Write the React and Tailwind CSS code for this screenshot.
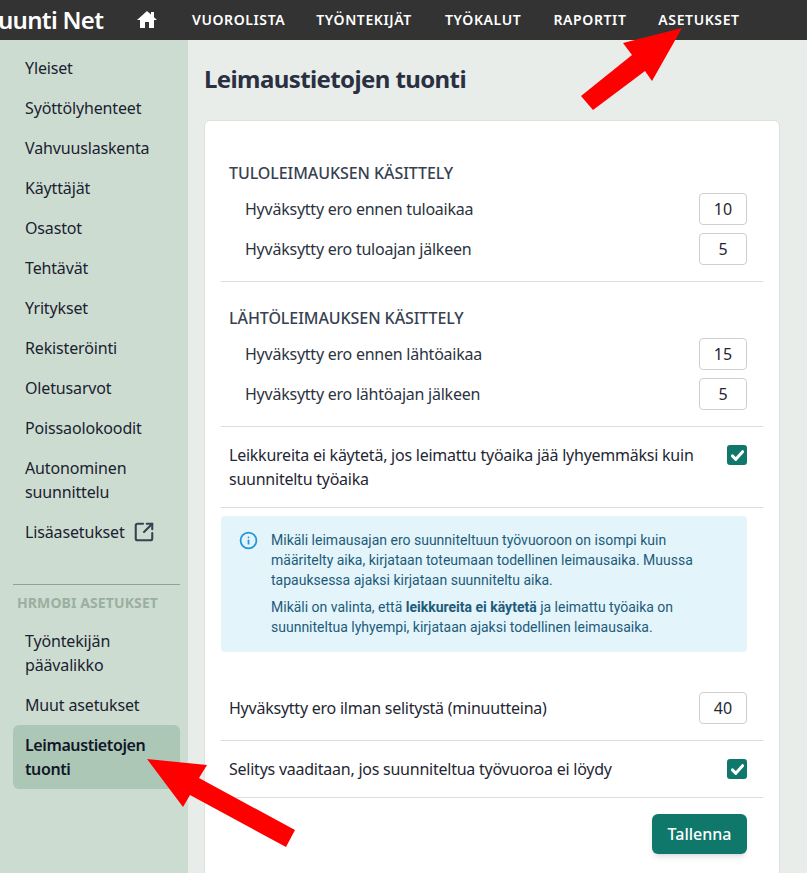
import { Info, SquareArrowOutUpRight } from 'lucide-react';

const navItems = [
  { label: 'VUOROLISTA', width: 'w-[91px]' },
  { label: 'TYÖNTEKIJÄT', width: 'w-[97px]' },
  { label: 'TYÖKALUT', width: 'w-[76px]' },
  { label: 'RAPORTIT', width: 'w-[72px]' },
  { label: 'ASETUKSET', width: 'w-[82px]' },
];

const sideItems = ['Yleiset', 'Syöttölyhenteet', 'Vahvuuslaskenta', 'Käyttäjät', 'Osastot', 'Tehtävät', 'Yritykset', 'Rekisteröinti', 'Oletusarvot', 'Poissaolokoodit'];

const SideLink = ({ children, active }) => (
  <a className={`block rounded-md px-3 py-2 text-base leading-6 ${active ? 'bg-[#adc7b7] font-semibold tracking-[-0.4px] text-[#111827]' : 'tracking-[-0.15px] text-[#1a2230]'}`}>
    {children}
  </a>
);

const NumberRow = ({ label, value }) => (
  <div className="flex h-8 items-center justify-between pl-6 pr-4">
    <span className="tracking-[-0.24px] text-[#2b3340]">{label}</span>
    <NumberBox value={value} />
  </div>
);

const NumberBox = ({ value }) => (
  <div className="flex h-8 w-12 items-center justify-center rounded border border-[#cfcfcf] bg-white text-[#1f2733]">{value}</div>
);

const Checkbox = () => (
  <div className="flex h-5 w-5 shrink-0 items-center justify-center rounded-[3px] bg-[#10776b]">
    <svg viewBox="0 0 20 20" className="h-[17px] w-[17px]" fill="none" stroke="white" strokeWidth="3.5" strokeLinecap="round" strokeLinejoin="round">
      <path d="M4 10.5l4 4 8-9" />
    </svg>
  </div>
);

const App = () => {
  return (
    <div className="relative flex h-screen flex-col overflow-hidden font-['Noto_Sans',sans-serif] text-base">
      <header className="flex h-10 shrink-0 items-center bg-[#333333] text-white">
        <div className="ml-[-2px] w-[137px] text-2xl font-semibold leading-none tracking-[-0.7px]">uunti Net</div>
        <svg viewBox="0 0 24 24" className="h-6 w-6" fill="white">
          <path d="M19 9.3V4h-3v2.6L12 3 2 12h3v8h5v-6h4v6h5v-8h3z" />
        </svg>
        <nav className="ml-[33px] flex gap-[32.5px] text-sm font-semibold tracking-[0.6px]">
          {navItems.map((item) => (
            <a key={item.label} className={`${item.width} whitespace-nowrap text-center`}>{item.label}</a>
          ))}
        </nav>
      </header>

      <div className="flex min-h-0 flex-1">
        <aside className="w-[188px] shrink-0 bg-[#cddcd0] pl-[13px] pr-2 pt-2">
          {sideItems.map((item) => (
            <SideLink key={item}>{item}</SideLink>
          ))}
          <SideLink>Autonominen suunnittelu</SideLink>
          <SideLink>
            <span className="flex items-center gap-2">
              Lisäasetukset
              <SquareArrowOutUpRight size={22} strokeWidth={2.25} className="text-[#374151]" />
            </span>
          </SideLink>
          <div className="mt-8 border-t border-[#8fa394]" />
          <div className="flex h-9 items-center px-1 text-sm font-bold tracking-[0.1px] text-[#9aaf9f]">HRMOBI ASETUKSET</div>
          <SideLink>Työntekijän päävalikko</SideLink>
          <SideLink>Muut asetukset</SideLink>
          <SideLink active>Leimaustietojen tuonti</SideLink>
        </aside>

        <main className="min-w-0 flex-1 bg-[#e8ede9] pl-4 pr-[27px]">
          <h1 className="flex h-20 items-center pb-[2px] text-2xl font-bold tracking-[-0.6px] text-[#2a3042]">Leimaustietojen tuonti</h1>

          <div className="h-[800px] rounded-md border border-[#e0e0e0] bg-white px-4">
            <section className="border-b border-[#dddddd] pb-4 pt-10">
              <h2 className="mb-[8px] pl-2 font-medium uppercase leading-6 tracking-[-0.07px] text-[#374151]">Tuloleimauksen käsittely</h2>
              <div className="flex flex-col gap-2">
                <NumberRow label="Hyväksytty ero ennen tuloaikaa" value="10" />
                <NumberRow label="Hyväksytty ero tuloajan jälkeen" value="5" />
              </div>
            </section>

            <section className="border-b border-[#dddddd] pb-4 pt-6">
              <h2 className="mb-[8px] pl-2 font-medium uppercase leading-6 tracking-[-0.07px] text-[#374151]">Lähtöleimauksen käsittely</h2>
              <div className="flex flex-col gap-2">
                <NumberRow label="Hyväksytty ero ennen lähtöaikaa" value="15" />
                <NumberRow label="Hyväksytty ero lähtöajan jälkeen" value="5" />
              </div>
            </section>

            <div className="flex items-start justify-between border-b border-[#dddddd] pb-4 pl-2 pr-4 pt-4">
              <span className="w-[470px] leading-6 tracking-[-0.24px] text-[#1f2733]">Leikkureita ei käytetä, jos leimattu työaika jää lyhyemmäksi kuin suunniteltu työaika</span>
              <div className="mt-[2px]"><Checkbox /></div>
            </div>

            <div className="mr-4 mt-2 flex gap-[13px] rounded bg-[#e3f4fb] pb-[15px] pl-[18px] pr-[18px] pt-[14px] font-['Roboto',sans-serif] text-sm leading-5 text-[#1d5b79]">
              <Info size={19} strokeWidth={2.25} className="mt-[1px] shrink-0 text-[#2196d8]" />
              <div>
                <p className="mb-[7px]">Mikäli leimausajan ero suunniteltuun työvuoroon on isompi kuin määritelty aika, kirjataan toteumaan todellinen leimausaika. Muussa tapauksessa ajaksi kirjataan suunniteltu aika.</p>
                <p>Mikäli on valinta, että <strong className="font-bold">leikkureita ei käytetä</strong> ja leimattu työaika on suunniteltua lyhyempi, kirjataan ajaksi todellinen leimausaika.</p>
              </div>
            </div>

            <div className="mt-10 flex items-center justify-between border-b border-[#dddddd] pb-4 pl-2 pr-4">
              <span className="tracking-[-0.24px] text-[#1f2733]">Hyväksytty ero ilman selitystä (minuutteina)</span>
              <NumberBox value="40" />
            </div>

            <div className="flex h-[57px] items-center justify-between border-b border-[#dddddd] pl-2 pr-4">
              <span className="tracking-[-0.24px] text-[#1f2733]">Selitys vaaditaan, jos suunniteltua työvuoroa ei löydy</span>
              <Checkbox />
            </div>

            <div className="flex justify-end pr-4 pt-4">
              <button className="h-10 w-[95px] rounded-md bg-[#10776b] font-medium text-white shadow-md">Tallenna</button>
            </div>
          </div>
        </main>
      </div>

      {/* punaiset nuolet kuvakaappauksen päällä */}
      <svg className="pointer-events-none absolute left-0 top-0 h-[873px] w-[807px]" viewBox="0 0 807 873">
        <polygon fill="#ff0000" points="682,28 623,43 632,55 581,96 593,110 645,71 652,81" />
        <polygon fill="#ff0000" points="147,759 207,765 199,778 295,830 286,847 190,795 183,807" />
      </svg>
    </div>
  );
};

export default App;
